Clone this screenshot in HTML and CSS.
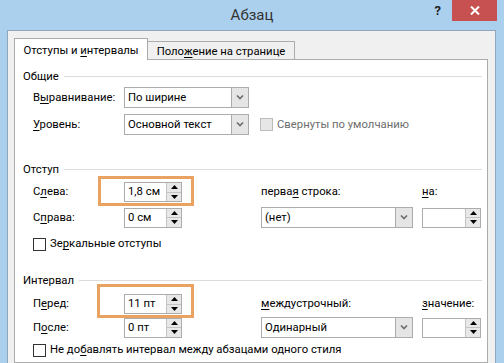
FILE: index.html
```html
<!DOCTYPE html>
<html lang="ru">
<head>
<meta charset="utf-8">
<title>Абзац</title>
<link rel="stylesheet" href="styles.css">
</head>
<body>
<div class="window">
  <header class="titlebar">
    <div></div>
    <div class="title">Абзац</div>
    <div class="caption-btns">
      <span class="help">?</span>
      <span class="close"><svg width="10" height="9" viewBox="0 0 10 9"><path d="M1 0.5 L9 8.5 M9 0.5 L1 8.5" stroke="#fff" stroke-width="2" fill="none"/></svg></span>
    </div>
  </header>
  <div class="client">
    <div class="tabs">
      <div class="tab active">Отступы и <u>и</u>нтервалы</div>
      <div class="tab inactive">Поло<u>ж</u>ение на странице</div>
    </div>
    <div class="panel">
      <section class="group g-general">
        <div class="group-head"><span>Общие</span><i class="rule"></i></div>
        <div class="grid-general">
          <span class="lbl">В<u>ы</u>равнивание:</span>
          <div class="select w-short"><span class="val">По ширине</span><span class="drop"><svg width="8" height="5" viewBox="0 0 8 5"><path d="M1 0.5 L4 3.5 L7 0.5" stroke="#6e6e6e" stroke-width="1.6" fill="none"/></svg></span></div>
          <span></span>
          <span class="lbl"><u>У</u>ровень:</span>
          <div class="select w-short"><span class="val">Основной текст</span><span class="drop"><svg width="8" height="5" viewBox="0 0 8 5"><path d="M1 0.5 L4 3.5 L7 0.5" stroke="#6e6e6e" stroke-width="1.6" fill="none"/></svg></span></div>
          <div class="check disabled"><span class="box"></span><span>Свернуты по умолчанию</span></div>
        </div>
      </section>

      <section class="group g-indent">
        <div class="group-head"><span>Отступ</span><i class="rule"></i></div>
        <div class="grid-fields">
          <span class="lbl">С<u>л</u>ева:</span>
          <div class="spin-cell">
            <div class="spin"><span class="val">1,8 см</span><span class="arrows"><span class="up"><svg width="7" height="4" viewBox="0 0 7 4"><path d="M0 4 L3.5 0 L7 4 Z" fill="#000"/></svg></span><span class="down"><svg width="7" height="4" viewBox="0 0 7 4"><path d="M0 0 L3.5 4 L7 0 Z" fill="#000"/></svg></span></span></div>
            <span class="mark mark-a"></span>
          </div>
          <span class="lbl">перва<u>я</u> строка:</span>
          <span class="lbl"><u>н</u>а:</span>

          <span class="lbl">С<u>п</u>рава:</span>
          <div class="spin-cell">
            <div class="spin"><span class="val">0 см</span><span class="arrows"><span class="up"><svg width="7" height="4" viewBox="0 0 7 4"><path d="M0 4 L3.5 0 L7 4 Z" fill="#000"/></svg></span><span class="down"><svg width="7" height="4" viewBox="0 0 7 4"><path d="M0 0 L3.5 4 L7 0 Z" fill="#000"/></svg></span></span></div>
          </div>
          <div class="select w-long"><span class="val">(нет)</span><span class="drop"><svg width="8" height="5" viewBox="0 0 8 5"><path d="M1 0.5 L4 3.5 L7 0.5" stroke="#6e6e6e" stroke-width="1.6" fill="none"/></svg></span></div>
          <div class="spin w-right"><span class="val"></span><span class="arrows"><span class="up"><svg width="7" height="4" viewBox="0 0 7 4"><path d="M0 4 L3.5 0 L7 4 Z" fill="#000"/></svg></span><span class="down"><svg width="7" height="4" viewBox="0 0 7 4"><path d="M0 0 L3.5 4 L7 0 Z" fill="#000"/></svg></span></span></div>
        </div>
        <div class="check row-check"><span class="box"></span><span>Зе<u>р</u>кальные отступы</span></div>
      </section>

      <section class="group g-spacing">
        <div class="group-head"><span>Интервал</span><i class="rule"></i></div>
        <div class="grid-fields">
          <span class="lbl">П<u>е</u>ред:</span>
          <div class="spin-cell">
            <div class="spin"><span class="val">11 пт</span><span class="arrows"><span class="up"><svg width="7" height="4" viewBox="0 0 7 4"><path d="M0 4 L3.5 0 L7 4 Z" fill="#000"/></svg></span><span class="down"><svg width="7" height="4" viewBox="0 0 7 4"><path d="M0 0 L3.5 4 L7 0 Z" fill="#000"/></svg></span></span></div>
            <span class="mark mark-b"></span>
          </div>
          <span class="lbl"><u>м</u>еждустрочный:</span>
          <span class="lbl"><u>з</u>начение:</span>

          <span class="lbl">П<u>о</u>сле:</span>
          <div class="spin-cell">
            <div class="spin"><span class="val">0 пт</span><span class="arrows"><span class="up"><svg width="7" height="4" viewBox="0 0 7 4"><path d="M0 4 L3.5 0 L7 4 Z" fill="#000"/></svg></span><span class="down"><svg width="7" height="4" viewBox="0 0 7 4"><path d="M0 0 L3.5 4 L7 0 Z" fill="#000"/></svg></span></span></div>
          </div>
          <div class="select w-long"><span class="val">Одинарный</span><span class="drop"><svg width="8" height="5" viewBox="0 0 8 5"><path d="M1 0.5 L4 3.5 L7 0.5" stroke="#6e6e6e" stroke-width="1.6" fill="none"/></svg></span></div>
          <div class="spin w-right"><span class="val"></span><span class="arrows"><span class="up"><svg width="7" height="4" viewBox="0 0 7 4"><path d="M0 4 L3.5 0 L7 4 Z" fill="#000"/></svg></span><span class="down"><svg width="7" height="4" viewBox="0 0 7 4"><path d="M0 0 L3.5 4 L7 0 Z" fill="#000"/></svg></span></span></div>
        </div>
        <div class="check row-check2"><span class="box"></span><span>Не до<u>б</u>авлять интервал между абзацами одного стиля</span></div>
      </section>
    </div>
  </div>
</div>
</body>
</html>
```

FILE: styles.css
```css
* { box-sizing: border-box; margin: 0; padding: 0; }
html, body { width: 504px; height: 363px; overflow: hidden; }
body {
  background: #abd0ee;
  font-family: Roboto, "Noto Sans", sans-serif;
  font-size: 11.3px;
  color: #000;
}
u { text-decoration: underline; text-underline-offset: 2px; text-decoration-thickness: 1px; }

.window { height: 363px; display: flex; flex-direction: column; }

.titlebar {
  height: 30px;
  flex: none;
  display: grid;
  grid-template-columns: 1fr auto 1fr;
  align-items: start;
}
.title { font-size: 15px; color: #333; line-height: 30px; }
.caption-btns { justify-self: end; display: flex; align-items: flex-start; }
.help { font-weight: bold; font-size: 13px; color: #222; line-height: 21px; margin-right: 11px; }
.close {
  width: 45px; height: 21px; margin-right: 7px;
  background: #c75050;
  display: flex; align-items: center; justify-content: center;
}

.client {
  flex: 1;
  margin: 0 8px 0 7px;
  background: #f0f0f0;
  border: 1px solid #8fa6bc;
  border-bottom: none;
  padding: 7px 7px 0 6px;
  display: flex;
  flex-direction: column;
}

.tabs { height: 21px; display: flex; align-items: flex-end; flex: none; }
.tab {
  border: 1px solid #acacac;
  border-bottom: none;
  text-align: center;
  line-height: 16px;
  white-space: nowrap;
}
.tab.active {
  width: 134px; height: 22px; margin-bottom: -1px;
  background: #fff; position: relative; z-index: 1;
  padding-top: 4px;
}
.tab.inactive {
  width: 148px; height: 18px; margin-left: -1px;
  background: #f0f0f0;
  padding-top: 2px;
}

.panel {
  flex: 1;
  background: #fff;
  border: 1px solid #acacac;
  padding: 9px 5px 0 8px;
}

.group-head { display: flex; align-items: center; height: 16px; line-height: 16px; }
.rule { flex: 1; height: 1px; background: #dcdcdc; margin-left: 5px; margin-top: -2px; }

.lbl { white-space: nowrap; line-height: 16px; }

.grid-general {
  margin: 2px 0 0 10px;
  display: grid;
  grid-template-columns: 91px 125px auto;
  grid-auto-rows: 21px;
  row-gap: 6px;
  align-items: center;
}

.g-indent { margin-top: 27px; }
.g-spacing { margin-top: 21px; }

.grid-fields {
  margin: 4px 0 0 10px;
  display: grid;
  grid-template-columns: 91px 137px 161px 59px;
  grid-template-rows: 20px 21px;
  row-gap: 5px;
  align-items: center;
}
.g-spacing .grid-fields { margin-top: 5px; row-gap: 3px; }

.select {
  height: 21px;
  border: 1px solid #acacac;
  background: #fff;
  display: flex;
  align-items: stretch;
}
.w-short { width: 125px; }
.w-long { width: 152px; }
.select .val { flex: 1; padding-left: 3px; line-height: 19px; white-space: nowrap; }
.drop {
  width: 17px;
  background: #e5e5e5;
  border-left: 1px solid #acacac;
  display: flex; align-items: center; justify-content: center;
}

.spin-cell { position: relative; height: 20px; }
.spin {
  width: 58px; height: 20px;
  border: 1px solid #acacac;
  background: #fff;
  display: flex;
}
.spin.w-right { width: 59px; }
.spin .val { flex: 1; padding-left: 3px; line-height: 18px; white-space: nowrap; }
.arrows { width: 15px; display: flex; flex-direction: column; border-left: 1px solid #c4c4c4; }
.arrows span {
  flex: 1;
  background: #e8e8e8;
  display: flex; align-items: center; justify-content: center;
}
.arrows .up { border-bottom: 1px solid #c4c4c4; }

.mark {
  position: absolute;
  border: 3px solid #eaa263;
  pointer-events: none;
}
.mark-a { left: -26px; top: -6px; width: 96px; height: 30px; }
.mark-b { left: -27px; top: -10px; width: 97px; height: 34px; }

.check { display: flex; align-items: center; line-height: 16px; white-space: nowrap; }
.check .box {
  width: 13px; height: 13px;
  border: 1px solid #333;
  background: #fff;
  margin-right: 4px;
  flex: none;
}
.check.disabled { margin-left: 11px; color: #6d6d6d; }
.check.disabled .box { border-color: #bcbcbc; background: #e6e6e6; }
.row-check { margin: 8px 0 0 10px; }
.row-check2 { margin: 4px 0 0 10px; }
```
